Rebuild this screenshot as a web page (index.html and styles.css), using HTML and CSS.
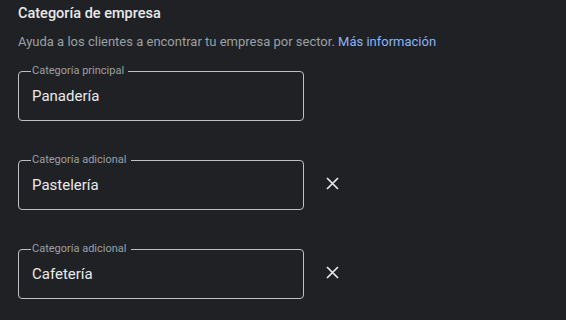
FILE: index.html
```html
<!DOCTYPE html>
<html lang="es">
<head>
    <meta charset="UTF-8">
    <meta name="viewport" content="width=device-width, initial-scale=1.0">
    <title>Categoría de empresa</title>
    <link rel="stylesheet" href="styles.css">
</head>
<body>
    <div class="section">
        <h2 class="section-title">Categoría de empresa</h2>
        <p class="section-help">Ayuda a los clientes a encontrar tu empresa por sector. <a href="#" class="link">Más información</a></p>

        <div class="field-row">
            <fieldset class="field">
                <legend>Categoría principal</legend>
                <span class="field-value">Panadería</span>
            </fieldset>
        </div>

        <div class="field-row">
            <fieldset class="field">
                <legend>Categoría adicional</legend>
                <span class="field-value">Pastelería</span>
            </fieldset>
            <button class="remove" aria-label="Quitar">
                <svg width="13" height="13" viewBox="0 0 13 13"><path d="M1 1L12 12M12 1L1 12" stroke="#e8eaed" stroke-width="1.7"/></svg>
            </button>
        </div>

        <div class="field-row">
            <fieldset class="field">
                <legend>Categoría adicional</legend>
                <span class="field-value">Cafetería</span>
            </fieldset>
            <button class="remove" aria-label="Quitar">
                <svg width="13" height="13" viewBox="0 0 13 13"><path d="M1 1L12 12M12 1L1 12" stroke="#e8eaed" stroke-width="1.7"/></svg>
            </button>
        </div>
    </div>
</body>
</html>
```

FILE: styles.css
```css
/* Page */
body {
    margin: 0;
    background: #202124;
    font-family: Roboto, 'Noto Sans', Arial, sans-serif;
    color: #e8eaed;
    overflow: hidden;
}

.section {
    padding: 4px 18px 0 18px;
}

.section-title {
    font-size: 14.5px;
    font-weight: 500;
    margin: 0;
    line-height: 20px;
}

.section-help {
    font-size: 13px;
    color: #9aa0a6;
    margin: 10px 0 15px 0;
    line-height: 16px;
}

.link {
    color: #8ab4f8;
    text-decoration: none;
}

/* Outlined fields */
.field-row {
    display: flex;
    align-items: center;
    margin-bottom: 33px;
}

.field {
    width: 286px;
    box-sizing: border-box;
    height: 56px;
    margin: 0;
    padding: 0 12px 0 13px;
    border: 1px solid #bdc1c6;
    border-radius: 4px;
    display: flex;
    align-items: center;
}

.field legend {
    font-size: 11px;
    line-height: 12px;
    color: #9aa0a6;
    padding: 0 4px 0 1px;
    margin-left: -1px;
}

.field-value {
    font-size: 15px;
    margin-top: -6px;
}

.remove {
    background: none;
    border: none;
    padding: 0;
    margin-left: 22px;
    margin-top: 3px;
    width: 13px;
    height: 13px;
    cursor: pointer;
    display: flex;
}
```
